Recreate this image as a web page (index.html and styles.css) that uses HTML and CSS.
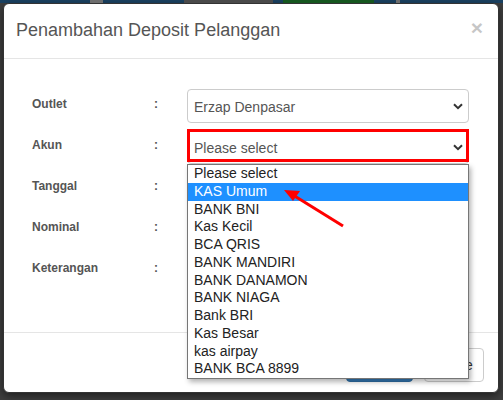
FILE: index.html
```html
<!DOCTYPE html>
<html>
<head>
<meta charset="utf-8">
<link rel="stylesheet" href="styles.css">
</head>
<body>
<div class="page-strip">
  <span class="seg seg-a"></span>
  <span class="seg seg-b"></span>
  <span class="seg seg-c"></span>
  <span class="seg seg-d"></span>
</div>
<div class="modal">
  <div class="modal-header">
    <h4 class="modal-title">Penambahan Deposit Pelanggan</h4>
    <span class="close">×</span>
  </div>
  <div class="modal-body">
    <div class="form-row">
      <label class="label">Outlet</label>
      <span class="colon">:</span>
      <div class="select">
        <span class="select-text">Erzap Denpasar</span>
        <svg class="chev" width="10" height="7" viewBox="0 0 10 7"><path d="M1 1.2 L5 5.2 L9 1.2" fill="none" stroke="#333" stroke-width="2"/></svg>
      </div>
    </div>
    <div class="form-row">
      <label class="label">Akun</label>
      <span class="colon">:</span>
      <div class="select select-open">
        <span class="select-text">Please select</span>
        <svg class="chev" width="10" height="7" viewBox="0 0 10 7"><path d="M1 1.2 L5 5.2 L9 1.2" fill="none" stroke="#333" stroke-width="2"/></svg>
        <span class="highlight-box"></span>
        <ul class="listbox">
          <li>Please select</li>
          <li class="active">KAS Umum</li>
          <li>BANK BNI</li>
          <li>Kas Kecil</li>
          <li>BCA QRIS</li>
          <li>BANK MANDIRI</li>
          <li>BANK DANAMON</li>
          <li>BANK NIAGA</li>
          <li>Bank BRI</li>
          <li>Kas Besar</li>
          <li>kas airpay</li>
          <li>BANK BCA 8899</li>
        </ul>
        <svg class="arrow" width="70" height="50" viewBox="0 0 70 50">
          <line x1="62" y1="45" x2="12" y2="14" stroke="#f00" stroke-width="3"/>
          <polygon points="3,9 19,10 12,20" fill="#f00"/>
        </svg>
      </div>
    </div>
    <div class="form-row">
      <label class="label">Tanggal</label>
      <span class="colon">:</span>
      <div class="empty"></div>
    </div>
    <div class="form-row">
      <label class="label">Nominal</label>
      <span class="colon">:</span>
      <div class="empty"></div>
    </div>
    <div class="form-row">
      <label class="label">Keterangan</label>
      <span class="colon">:</span>
      <div class="empty"></div>
    </div>
  </div>
  <div class="modal-footer">
    <button class="btn btn-primary">Simpan</button>
    <button class="btn btn-default">Close</button>
  </div>
</div>
</body>
</html>
```
FILE: styles.css
```css
* { box-sizing: border-box; }
html, body { margin: 0; padding: 0; }
body {
  width: 503px;
  height: 400px;
  overflow: hidden;
  background: #3e3e3e;
  font-family: "Liberation Sans", Arial, sans-serif;
}
.page-strip {
  height: 3px;
  background: #1b4262;
  display: flex;
}
.seg { display: block; height: 3px; }
.seg-a { margin-left: 90px; width: 13px; background: #6e6e6e; }
.seg-b { margin-left: 81px; width: 89px; background: #4a4a4a; }
.seg-c { margin-left: 10px; width: 91px; background: #15561f; }
.seg-d { margin-left: 22px; width: 4px; background: #6e6e6e; }

.modal {
  margin-left: 3px;
  width: 496px;
  height: 390px;
  background: #fff;
  border: 1px solid #333;
  border-radius: 6px;
  display: flex;
  flex-direction: column;
  box-shadow: 0 3px 9px rgba(0,0,0,.5);
}
.modal-header {
  display: flex;
  justify-content: space-between;
  align-items: flex-start;
  padding: 14px 15px 15px 12px;
  border-bottom: 1px solid #e5e5e5;
}
.modal-title {
  margin: 0;
  font-size: 18px;
  line-height: 25px;
  font-weight: normal;
  color: #555;
}
.close {
  font-size: 21px;
  font-weight: bold;
  line-height: 21px;
  color: #000;
  opacity: .22;
  margin-top: -1px;
  margin-right: 0;
}
.modal-body {
  padding: 30px 15px 45px 28px;
  display: flex;
  flex-direction: column;
  gap: 7px;
  flex: 1;
}
.form-row {
  display: grid;
  grid-template-columns: 122px 33px 282px;
  height: 34px;
}
.label, .colon {
  padding-top: 7px;
  font-size: 12px;
  line-height: 17px;
  font-weight: bold;
  color: #555;
}
.select {
  position: relative;
  height: 34px;
  border: 1px solid #ccc;
  border-radius: 4px;
  display: flex;
  align-items: center;
  justify-content: space-between;
  padding: 0 5px 0 6px;
  font-size: 14px;
  color: #555;
}
.select-text { line-height: 20px; padding-top: 1px; }
.chev { display: block; margin-top: 1px; }
.highlight-box {
  position: absolute;
  left: -1px;
  right: -1px;
  top: -2px;
  bottom: 1px;
  border: 3px solid #f00;
}
.listbox {
  position: absolute;
  left: -1px;
  top: 33px;
  width: 282px;
  margin: 0;
  padding: 0;
  list-style: none;
  background: #fff;
  border: 1px solid #767676;
  box-shadow: 2px 3px 5px rgba(0,0,0,.3);
  z-index: 5;
}
.listbox li {
  height: 17.75px;
  line-height: 17.75px;
  padding-left: 6px;
  font-size: 14px;
  color: #222;
  white-space: nowrap;
}
.listbox li.active {
  background: #1e90ff;
  color: #fff;
}
.arrow {
  position: absolute;
  left: 93px;
  top: 50px;
  z-index: 6;
}
.modal-footer {
  border-top: 1px solid #e5e5e5;
  padding: 15px 14px 10px 15px;
  display: flex;
  justify-content: flex-end;
  gap: 11px;
}
.btn {
  height: 34px;
  border-radius: 4px;
  font-family: "Liberation Sans", Arial, sans-serif;
  font-size: 14px;
  padding: 0 12px;
}
.btn-primary {
  width: 67px;
  background: #337ab7;
  border: 1px solid #2e6da4;
  color: #fff;
}
.btn-default {
  width: 60px;
  background: #fff;
  border: 1px solid #ccc;
  color: #333;
}
```
